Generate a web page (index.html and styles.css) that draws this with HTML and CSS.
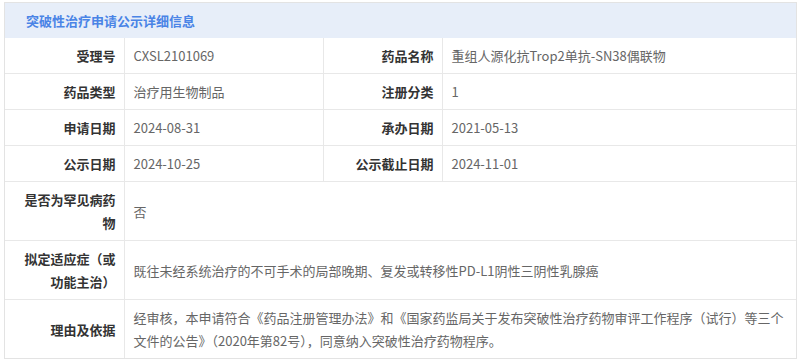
FILE: index.html
```html
<!DOCTYPE html>
<html lang="zh-CN">
<head>
<meta charset="utf-8">
<link rel="stylesheet" href="styles.css">
</head>
<body>
<div class="panel">
  <div class="panel-head">突破性治疗申请公示详细信息</div>
  <table class="info">
    <colgroup>
      <col class="c-label"><col class="c-value"><col class="c-label"><col class="c-value2">
    </colgroup>
    <tr>
      <th>受理号</th><td>CXSL2101069</td>
      <th>药品名称</th><td>重组人源化抗Trop2单抗-SN38偶联物</td>
    </tr>
    <tr>
      <th>药品类型</th><td>治疗用生物制品</td>
      <th>注册分类</th><td>1</td>
    </tr>
    <tr>
      <th>申请日期</th><td>2024-08-31</td>
      <th>承办日期</th><td>2021-05-13</td>
    </tr>
    <tr>
      <th>公示日期</th><td>2024-10-25</td>
      <th>公示截止日期</th><td>2024-11-01</td>
    </tr>
    <tr>
      <th>是否为罕见病药物</th><td colspan="3">否</td>
    </tr>
    <tr>
      <th>拟定适应症（或功能主治）</th><td colspan="3">既往未经系统治疗的不可手术的局部晚期、复发或转移性PD-L1阴性三阴性乳腺癌</td>
    </tr>
    <tr>
      <th>理由及依据</th><td colspan="3">经审核，本申请符合《药品注册管理办法》和《国家药监局关于发布突破性治疗药物审评工作程序（试行）等三个文件的公告》（2020年第82号），同意纳入突破性治疗药物程序。</td>
    </tr>
  </table>
</div>
</body>
</html>
```
FILE: styles.css
```css
html, body {
  margin: 0;
  padding: 0;
  background: #ffffff;
}
body {
  padding: 2px 3px 0 4px;
  font-family: "Noto Sans CJK SC", "Noto Sans", sans-serif;
}
.panel {
  width: 793px;
  border: 1px solid #e3e3e3;
  box-sizing: border-box;
}
.panel-head {
  height: 35px;
  line-height: 35px;
  padding-left: 21px;
  background: #e7eef9;
  color: #4a84e6;
  font-size: 13px;
  font-weight: bold;
  box-sizing: border-box;
}
.info {
  width: 100%;
  border-collapse: collapse;
  table-layout: fixed;
  font-size: 13px;
}
.c-label { width: 119px; }
.c-value { width: 199px; }
.c-value2 { width: auto; }
.info th,
.info td {
  border: 1px solid #e8e8e8;
  line-height: 23px;
  padding: 6px 8px 6px 9px;
  vertical-align: middle;
}
.info tr:first-child th,
.info tr:first-child td { border-top: none; }
.info tr:last-child th,
.info tr:last-child td { border-bottom: none; }
.info th:first-child { border-left: none; }
.info td:last-child { border-right: none; }
.info th {
  text-align: right;
  font-weight: bold;
  color: #333333;
  padding-right: 8px;
  padding-left: 8px;
}
.info td {
  text-align: left;
  color: #666666;
}
```
